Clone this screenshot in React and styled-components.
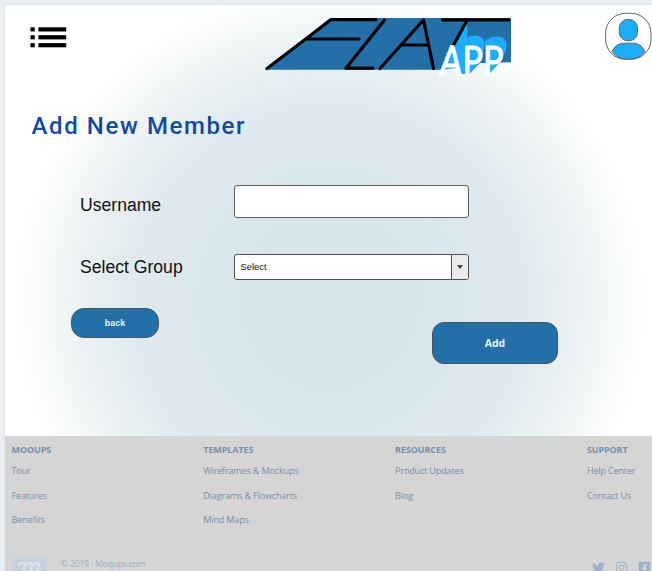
import React from "react";
import styled, { createGlobalStyle } from "styled-components";
import { FaTwitter, FaInstagram, FaFacebookSquare } from "react-icons/fa";

const GlobalStyle = createGlobalStyle`
  *, *::before, *::after { box-sizing: border-box; }
  body { margin: 0; background: #ebeff4; overflow: hidden; }
  button, input { font: inherit; }
`;

const Frame = styled.div`
  width: 652px;
  height: 571px;
  padding: 4px 0 0 3.5px;
  overflow: hidden;
  font-family: "Liberation Sans", Arial, sans-serif;
`;

const Page = styled.div`
  height: 567px;
  border-top: 1px solid #e1e6ea;
  border-left: 1px solid #e1e6ea;
  background: #fff;
  display: flex;
  flex-direction: column;
`;

const Main = styled.main`
  flex: 0 0 430.5px;
  background: radial-gradient(
    circle 318px at 325px 296px,
    #d6e3e9 0%,
    #d9e6ec 35%,
    #deeaef 60%,
    #e6eef0 72%,
    #f1f5f6 84%,
    #fbfcfc 94%,
    #ffffff 100%
  );
`;

const Header = styled.header`
  display: grid;
  grid-template-columns: 255px 345px 47px;
  height: 80px;
  align-items: start;
`;

const MenuButton = styled.button`
  display: block;
  margin: 22px 0 0 25px;
  padding: 0;
  width: 37px;
  height: 22px;
  border: 0;
  background: none;
`;

const LogoLink = styled.a`
  display: block;
  margin-top: 8px;
  height: 72px;
`;

const Avatar = styled.div`
  margin-top: 7px;
  height: 49px;
`;

const Drawing = styled.svg`
  display: block;
  overflow: visible;
`;

const Title = styled.h1`
  margin: 24px 0 0 27px;
  height: 35px;
  font: 500 24px/34px Roboto, sans-serif;
  letter-spacing: 1.6px;
  color: #124a9e;
  white-space: nowrap;
`;

const Form = styled.form`
  padding: 41px 0 0 75.5px;
`;

const Field = styled.div`
  display: grid;
  grid-template-columns: 154px 235px;
  align-items: center;
  height: ${(p) => p.$height}px;
  margin-bottom: ${(p) => p.$gap}px;
`;

const Label = styled.label`
  padding-top: ${(p) => p.$drop || 0}px;
  font-size: 17.6px;
  line-height: 24px;
  color: #111;
`;

const TextInput = styled.input`
  width: 235px;
  height: 33px;
  border: 1px solid #5c6063;
  border-radius: 3px;
  background: #fff;
  outline: 0;
`;

const Select = styled.div`
  display: flex;
  width: 235px;
  height: 26px;
  border: 1px solid #505355;
  border-radius: 3px;
  background: #fff;
  overflow: hidden;
`;

const SelectValue = styled.span`
  flex: 1;
  padding-left: 5.5px;
  font-size: 9.4px;
  line-height: 24px;
  color: #111;
`;

const SelectArrow = styled.span`
  display: grid;
  place-items: center;
  width: 17px;
  border-left: 1px solid #505355;
  background: #ebebeb;
`;

const Actions = styled.div`
  display: flex;
  justify-content: space-between;
  width: 487px;
  margin-left: -9px;
`;

const Button = styled.button`
  width: ${(p) => p.$w}px;
  height: ${(p) => p.$h}px;
  margin-top: ${(p) => p.$top || 0}px;
  padding: 0;
  border: 1px solid #4a545b;
  border-radius: ${(p) => p.$r}px;
  background: #2370a8;
  color: #e6eff6;
  font: bold ${(p) => p.$size}px ${(p) => p.$font || '"Liberation Sans"'}, sans-serif;
`;

const Footer = styled.footer`
  flex: 1;
  padding: 6.5px 0 0 7px;
  background: #d5d5d5;
  font-family: "Open Sans", sans-serif;
  color: #7c8fa7;
  overflow: hidden;
`;

const Columns = styled.div`
  display: grid;
  grid-template-columns: repeat(3, 191.8px) 1fr;
  height: 113px;
`;

const ColumnTitle = styled.h2`
  margin: 0 0 6px;
  font-size: 9px;
  font-weight: 700;
  line-height: 16px;
  letter-spacing: -0.1px;
`;

const FooterLink = styled.a`
  display: block;
  height: 24.5px;
  font-size: 9.15px;
  letter-spacing: -0.2px;
  line-height: 14px;
  white-space: nowrap;
`;

const Legal = styled.div`
  display: flex;
  align-items: flex-start;
  color: #9eb0c6;
`;

const Badge = styled.div`
  flex: 0 0 35px;
  height: 24px;
  margin-top: 2px;
  border-radius: 5px;
  background: #c6d1de;
`;

const Copyright = styled.span`
  flex: 1;
  margin-left: 14.5px;
  font-size: 8.6px;
  letter-spacing: -0.23px;
  line-height: 18px;
`;

const Social = styled.div`
  display: flex;
  gap: 10px;
  width: 60px;
  margin-top: 6px;
  color: #9db0c8;
`;

const footerColumns = [
  { title: "MOOUPS", links: ["Tour", "Features", "Benefits"] },
  { title: "TEMPLATES", links: ["Wireframes & Mockups", "Diagrams & Flowcharts", "Mind Maps"] },
  { title: "RESOURCES", links: ["Product Updates", "Blog"] },
  { title: "SUPPORT", links: ["Help Center", "Contact Us"] },
];

function MenuIcon() {
  return (
    <Drawing width="37" height="22" viewBox="0 0 37 22">
      {[0.3, 8.2, 16.1].map((y) => (
        <g key={y}>
          <rect x="0.5" y={y} width="4.2" height="4.2" />
          <rect x="8.4" y={y} width="27.8" height="4.2" />
        </g>
      ))}
    </Drawing>
  );
}

function Logo() {
  return (
    <Drawing width="256" height="72" viewBox="260 13 256 72">
      <path d="M265 69.8 330 18H511V62.3L465 63.5 445 69.8Z" fill="#2370a8" />
      <g fill="#1badff">
        <path d="M467 22 469 74 461 74 458 68 446 69 440 75 448 50Z" />
        <path d="M467 38Q474 34 480 36.5Q487 40 483.5 50L482 61 468 75.5Z" />
        <path d="M485 41Q494 34.5 502 37.5Q509 41 505.5 51L501 61 487.5 76Z" />
      </g>
      <g fill="none" stroke="#000" strokeWidth="3.2" strokeLinecap="round" strokeLinejoin="round">
        <path d="M267 68.5 331 19.7H376M307 39H359" />
        <path d="M384.5 20 346 68.2H373" />
        <path d="M380 68.5 423.5 20 433.5 68.5M402 45H427" />
        <path d="M442.5 19.8H509M466.5 21.5 453 46" />
      </g>
      <g
        fill="#fff"
        stroke="#fff"
        strokeWidth="1"
        strokeLinejoin="round"
        fontFamily="Lato, sans-serif"
        fontSize="41"
      >
        <text transform="translate(439 75.4) skewX(-4) scale(0.8 1)">A</text>
        <text transform="translate(462.6 75.4) scale(0.83 1)">P</text>
        <text transform="translate(483 75.4) scale(0.83 1)">P</text>
      </g>
    </Drawing>
  );
}

function AvatarIcon() {
  return (
    <Drawing width="47" height="49" viewBox="605 12 47 49">
      <rect x="605.6" y="13.3" width="45.4" height="46" rx="20" fill="#fff" stroke="#606468" />
      <rect x="619.3" y="19.5" width="18.2" height="21.3" rx="8.5" fill="#1badff" stroke="#606468" />
      <path
        d="M612 51.5Q616 43.2 624 43.2H633Q641 43.2 645 51.5Q639 59.3 629 59.3H628Q618 59.3 612 51.5Z"
        fill="#1badff"
        stroke="#606468"
      />
    </Drawing>
  );
}

function MoqupsMark() {
  return (
    <Drawing width="35" height="24" viewBox="0 0 35 24">
      <path
        d="M7 8Q10 4 13 7Q13 11 10 17M12 10Q17 4 20 7Q20 11 17 17M19 10Q24 4 27 7Q26 13 24 16Q26 18 29 14"
        fill="none"
        stroke="#dce1e6"
        strokeWidth="2.4"
        strokeLinecap="round"
      />
    </Drawing>
  );
}

export default function App() {
  return (
    <Frame>
      <GlobalStyle />
      <Page>
        <Main>
          <Header>
            <MenuButton aria-label="Menu"><MenuIcon /></MenuButton>
            <LogoLink><Logo /></LogoLink>
            <Avatar><AvatarIcon /></Avatar>
          </Header>
          <Title>Add New Member</Title>
          <Form>
            <Field $height={33} $gap={36}>
              <Label $drop={6}>Username</Label>
              <TextInput aria-label="Username" />
            </Field>
            <Field $height={26} $gap={28}>
              <Label>Select Group</Label>
              <Select>
                <SelectValue>Select</SelectValue>
                <SelectArrow>
                  <Drawing width="6" height="4"><path d="M0 0H6L3 4Z" fill="#444" /></Drawing>
                </SelectArrow>
              </Select>
            </Field>
            <Actions>
              <Button type="button" $w={88} $h={30} $r={13} $size={9}>back</Button>
              <Button type="button" $w={126} $h={42} $r={12} $top={14} $size={10.5} $font={'"Open Sans"'}>Add</Button>
            </Actions>
          </Form>
        </Main>
        <Footer>
          <Columns>
            {footerColumns.map((column) => (
              <nav key={column.title}>
                <ColumnTitle>{column.title}</ColumnTitle>
                {column.links.map((link) => <FooterLink key={link}>{link}</FooterLink>)}
              </nav>
            ))}
          </Columns>
          <Legal>
            <Badge><MoqupsMark /></Badge>
            <Copyright>© 2019 - Moqups.com</Copyright>
            <Social>
              <FaTwitter size={13} />
              <FaInstagram size={13} />
              <FaFacebookSquare size={13} />
            </Social>
          </Legal>
        </Footer>
      </Page>
    </Frame>
  );
}
